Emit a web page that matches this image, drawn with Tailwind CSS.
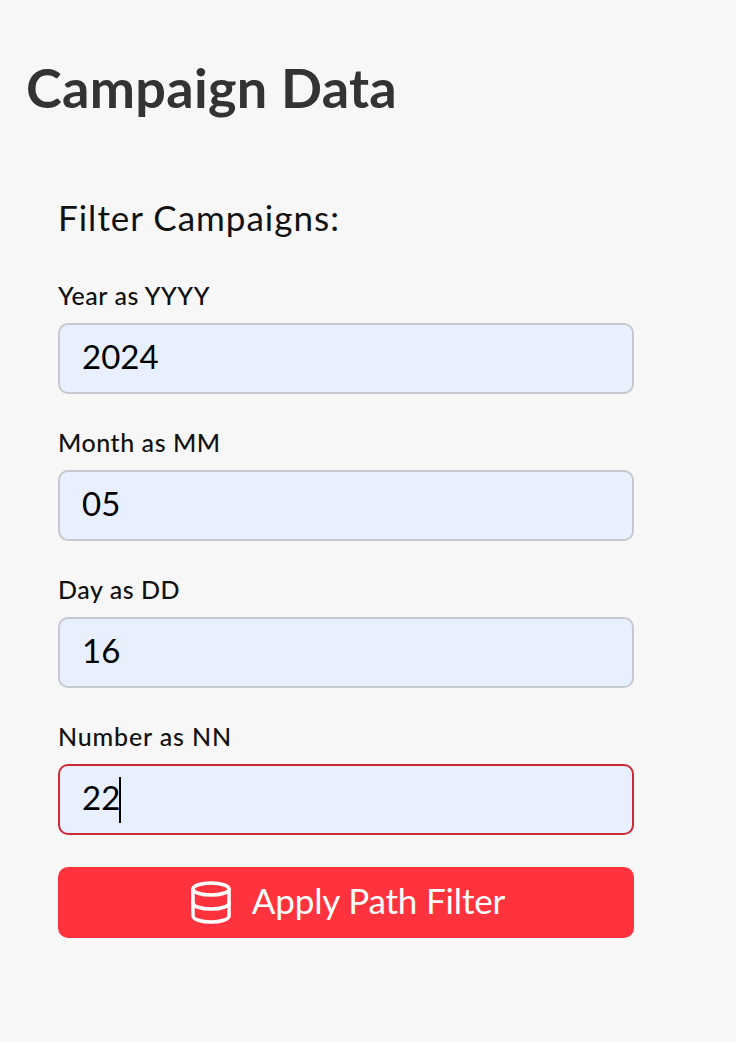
<!DOCTYPE html>
<html><head><meta charset="utf-8">
<script src="https://cdn.jsdelivr.net/npm/@tailwindcss/browser@4"></script>
</head>
<body class="bg-[#f7f7f7] font-['Lato',sans-serif] w-[736px] h-[1042px] overflow-hidden">
<h1 class="pl-[26px] pt-[58px] pb-[1px] text-[54px] leading-[60px] font-bold tracking-[.3px] text-[#333333]">Campaign Data</h1>
<form class="pl-[58px] w-[634px] pt-[78px] flex flex-col">
  <h2 class="text-[35px] leading-[40px] tracking-[1px] font-normal text-[#111111] pb-[1px]">Filter Campaigns:</h2>
  <label class="mt-[42px] text-[25px] leading-[30px] tracking-[.55px] text-[#111111] font-medium">Year as YYYY</label>
  <div class="mt-[13px] h-[71px] rounded-[10px] border-2 border-[#c6c9d0] bg-[#e8f0fe] flex items-center pl-[22px] pb-[4px] text-[33px] text-black">2024</div>
  <label class="mt-[33px] text-[25px] leading-[30px] tracking-[.55px] text-[#111111] font-medium">Month as MM</label>
  <div class="mt-[13px] h-[71px] rounded-[10px] border-2 border-[#c6c9d0] bg-[#e8f0fe] flex items-center pl-[22px] pb-[4px] text-[33px] text-black">05</div>
  <label class="mt-[33px] text-[25px] leading-[30px] tracking-[.55px] text-[#111111] font-medium">Day as DD</label>
  <div class="mt-[13px] h-[71px] rounded-[10px] border-2 border-[#c6c9d0] bg-[#e8f0fe] flex items-center pl-[22px] pb-[4px] text-[33px] text-black">16</div>
  <label class="mt-[33px] text-[25px] leading-[30px] tracking-[.85px] text-[#111111] font-medium">Number as NN</label>
  <div class="mt-[13px] h-[71px] rounded-[10px] border-2 border-[#cc2a36] bg-[#e8f0fe] flex items-center pl-[22px] text-[33px] text-black"><span class="-mt-[4px]">22</span><span class="w-[2px] h-[46px] -ml-[1px] bg-black"></span></div>
  <button type="button" class="mt-[32px] h-[71px] rounded-[10px] bg-[#ff333d] flex items-center justify-center gap-[19px] pl-[4px] text-white text-[35px]">
    <svg class="w-[42px] h-[44px]" viewBox="0 0 42 44" fill="none" stroke="white" stroke-width="3.5" stroke-linecap="round"><ellipse cx="20" cy="8" rx="18" ry="6"/><path d="M2 8v27c0 3.300 8 6 18 6s18-2.700 18-6V8"/><path d="M2 22c0 3.300 8 6 18 6s18-2.700 18-6"/></svg>
    <span class="tracking-[-.15px] -mt-[4px]">Apply Path Filter</span>
  </button>
</form>
</body></html>
